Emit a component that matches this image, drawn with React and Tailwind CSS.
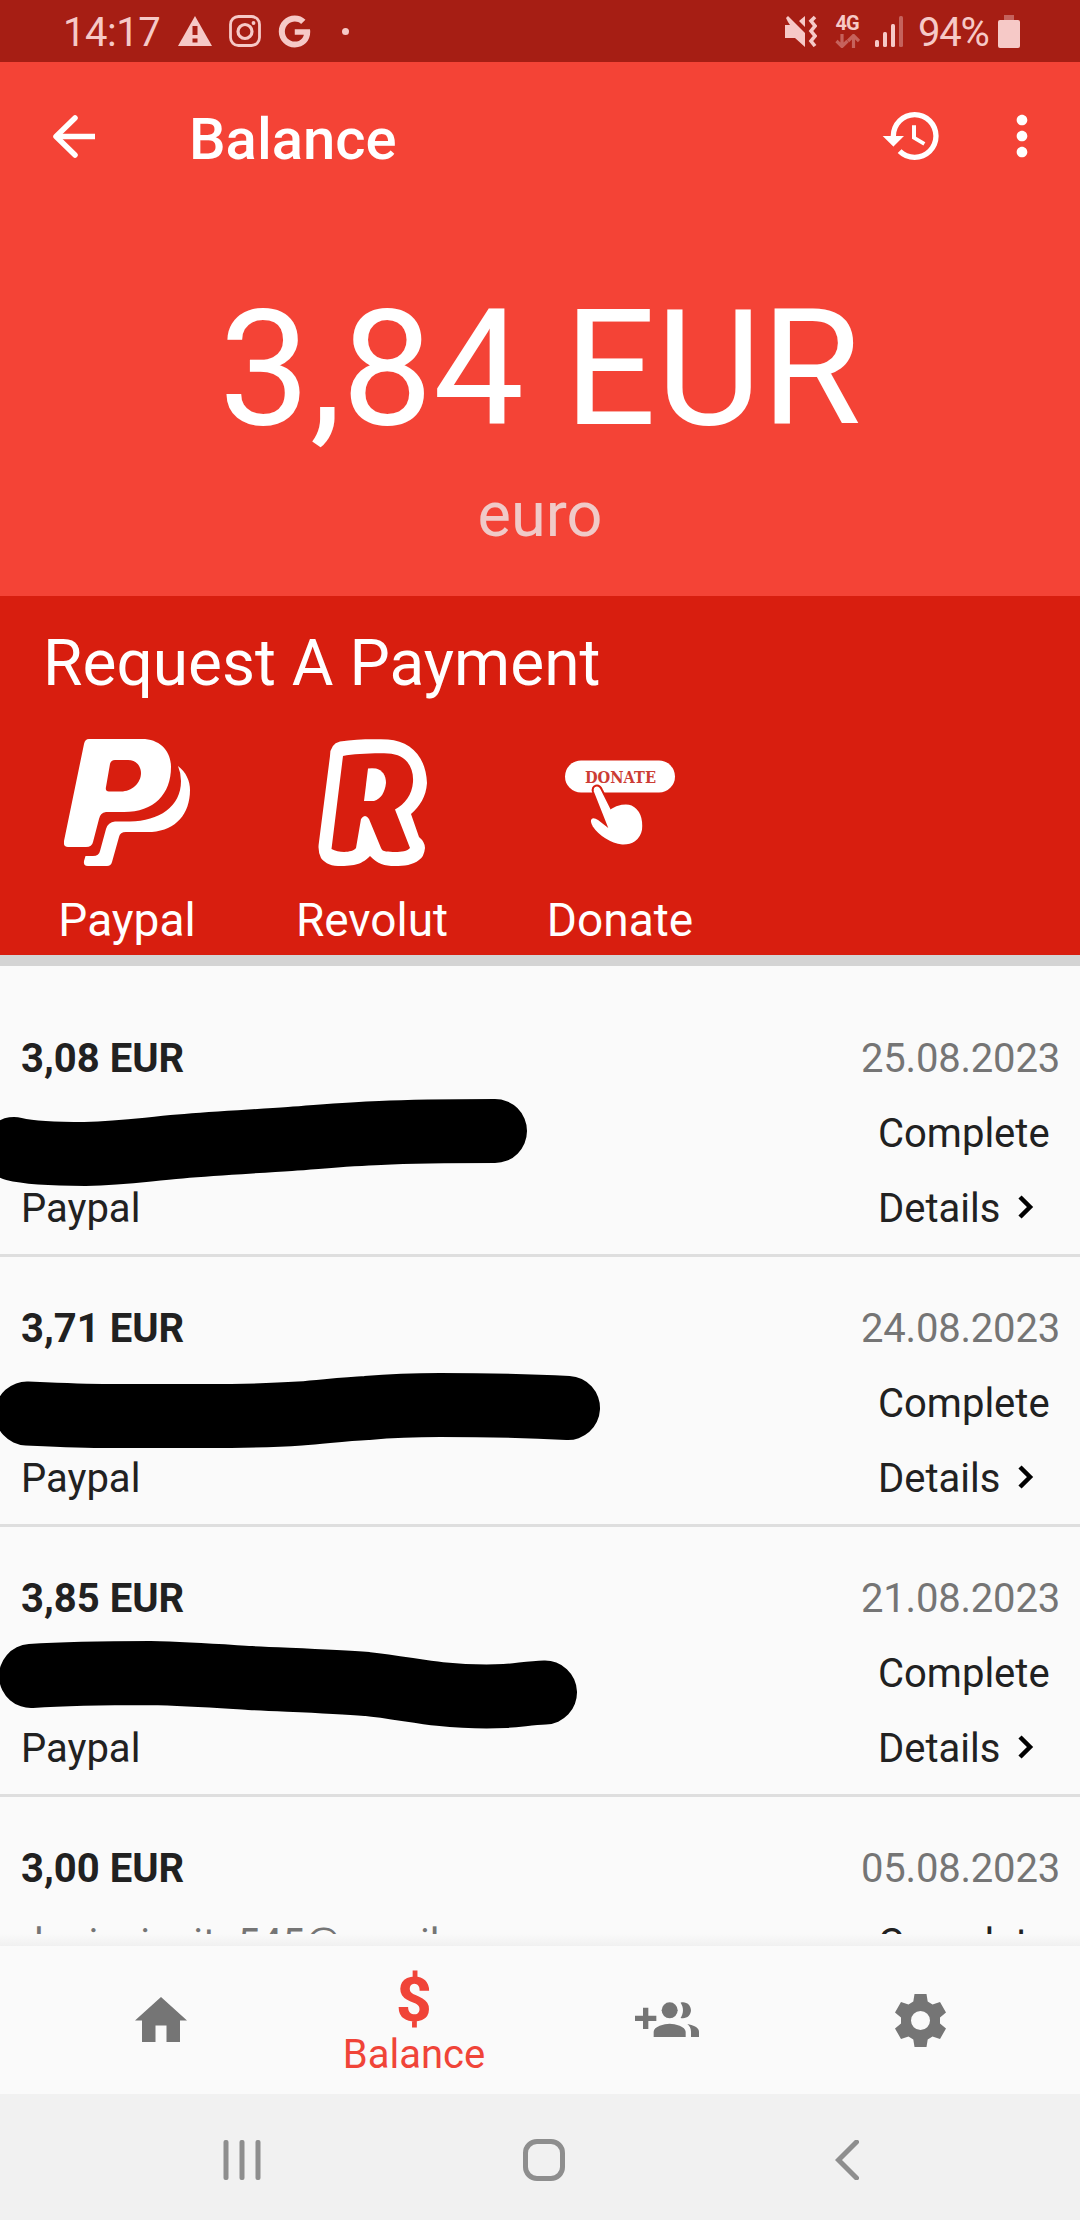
import React from 'react';
import { MdHistory, MdMoreVert } from 'react-icons/md';
import { FaGoogle } from 'react-icons/fa';

const payments = [
  {
    amount: '3,08 EUR',
    date: '25.08.2023',
    mark: 'M14 162 C30 166 60 167 85 167 C125 166 140 163 180 159.5 C220 156 245 155 290 152 C330 149 350 147 380 146 C420 144 450 144 495 144',
  },
  {
    amount: '3,71 EUR',
    date: '24.08.2023',
    mark: 'M27 156.5 C60 158 80 159 110 159 H204 C240 159 270 158.5 300 156.5 C330 154 345 152 367 151 C390 149 410 148 440 148 C480 148 530 149 568 151',
  },
  {
    amount: '3,85 EUR',
    date: '21.08.2023',
    mark: 'M31 149 C60 147 110 146 150 146 C190 147 210 148.5 250 151 C290 153 330 154 367 157 C395 160 420 165 440 167 C465 169.5 485 170 505 169 C520 168 530 166 545 165.5',
  },
  { amount: '3,00 EUR', date: '05.08.2023', email: 'doniecienite545@gmail.com' },
];

function StatusBar() {
  return (
    <div className="flex items-center h-[62px] pl-[63px] bg-[#a61e14] text-[#f6c9c7] shrink-0">
      <span className="w-[115px] pt-1 text-[40px] leading-none tracking-[-0.5px]">14:17</span>
      <svg className="w-[34px] h-[30px]" viewBox="0 0 34 30">
        <path d="M17 0L34 30H0Z" fill="currentColor" />
        <path d="M17 10v9M17 22.500v4" stroke="#a61e14" strokeWidth="5" />
      </svg>
      <svg className="ml-[17px] w-8 h-8" viewBox="0 0 32 32" fill="none" stroke="currentColor">
        <rect x="1.500" y="1.500" width="29" height="29" rx="8" strokeWidth="2.800" />
        <circle cx="16" cy="16.500" r="7" strokeWidth="3.200" />
        <circle cx="24.500" cy="8" r="1.900" fill="currentColor" stroke="none" />
      </svg>
      <FaGoogle className="ml-[17px] w-[33px] h-[33px]" />
      <span className="ml-[31px] w-[7px] h-[7px] rounded-full bg-current" />

      <svg className="ml-[436px] w-[32px] h-8" viewBox="0 0 32 32">
        <path d="M0 10H5L3 7L1 3L3 1L20 18V32L10 23H0ZM14 6L20 1V12Z" fill="currentColor" />
        <path d="M30 2L26 6L30 11L26 16L30 21L26 26L30 31" fill="none" stroke="currentColor" strokeWidth="3.600" />
      </svg>
      <div className="ml-[17px] flex flex-col w-[26px] items-center">
        <span className="text-[20px] leading-[16px] font-bold tracking-[-1px]">4G</span>
        <svg className="mt-[3px] w-[25px] h-[14px] opacity-40" viewBox="0 0 25 14" fill="none" stroke="currentColor" strokeWidth="3.200">
          <path d="M7 0V12M1.500 7L7 12.500L12.500 7M18.500 14V2M13 7L18.500 1.500L24 7" />
        </svg>
      </div>
      <svg className="ml-[15px] w-[29px] h-[31px]" viewBox="0 0 29 31" fill="currentColor">
        <rect x="0" y="24" width="4" height="7" rx="1.500" />
        <rect x="8" y="16" width="4" height="15" rx="1.500" />
        <rect x="16" y="8" width="4" height="23" rx="1.500" />
        <rect x="24" y="0" width="4" height="31" rx="1.500" opacity="0.4" />
      </svg>
      <span className="ml-[14px] w-[80px] pt-1 text-[40px] leading-none tracking-[-1.2px]">94%</span>
      <svg className="w-[22px] h-[33px]" viewBox="0 0 22 33" fill="currentColor">
        <rect x="6" y="0" width="10" height="6" opacity="0.4" />
        <rect x="0" y="5" width="22" height="28" rx="2" />
      </svg>
    </div>
  );
}

function PaypalLogo() {
  return (
    <svg className="w-[127px] h-[128px]" viewBox="0 0 127 128" fill="white">
      <path
        fillRule="evenodd"
        d="M25 0H78C96 0 107 12 107 28C107 55 90 73 60 73H42Q36 74 35 80L29 103Q28 108 22 108H4Q-1 108 0 102L20 5Q21 0 25 0ZM51 21Q47 21 46 25L42 48Q41 52.500 45 52.500H57C68 52.500 77 44 77 34C77 27 72 21 64 21Z"
      />
      <path d="M114 27C122 33 126 42 126 51C126 75 112 91 88 93H62Q56 93 55 98L48 123Q47 127 43 127H24Q19 127 20 122L21.500 117H29Q35 117 36 112L42 90Q44 83 51 82.500H66C95 82 117 68 117 42Q117 34 114 27Z" />
    </svg>
  );
}

function RevolutLogo() {
  return (
    <svg className="w-[109px] h-[128px]" viewBox="0 0 109 128">
      <path
        fill="white"
        d="M12 17Q12 5 22 2.500C38 0 55 0 70 0.500C92 2 108 17 109 44C108 58 102 67 93 75L101 98Q107 103 107 109Q106 118 101 121C95 126 86 127 77 127C66 127 60 125 52 117C44 125 38 127 20 127C11 127 5 122 3 119Q0 113 0.600 106Z"
      />
      <path
        fill="#d81e0f"
        d="M25 17C36 15 55 14 70 14.500C87 15 96 27 95 43C94 56 87 65 77 70.500L92 109C88 114 75 113 68 112.500Q64 112 63 109L51 80Q47 74 43 80L38 109C34 114 21 114 13.500 110Z"
      />
      <path fill="white" d="M50 29.500Q54 29 58 29.500C64 31 68 36 68 44C67 53 63 60 56 62H46Z" />
    </svg>
  );
}

function DonateLogo() {
  return (
    <svg className="w-[128px] h-[128px]" viewBox="0 0 128 128">
      <rect x="9" y="21.500" width="110" height="32" rx="16" fill="white" />
      <text
        x="29"
        y="43.500"
        fontFamily="'DejaVu Serif', serif"
        fontSize="16.500"
        fontWeight="bold"
        fill="#cc3c34"
        textLength="71"
        lengthAdjust="spacingAndGlyphs"
      >
        DONATE
      </text>
      <path
        d="M37 53C35 46 43 44 46 51L55 69C61 65 70 63 76 65.500C85 70 88 80 87 91C85 102 76 107 66 106.500C54 105 42 97 36 88C31 79 36 76 43 80.500L50 86Z"
        fill="white"
        stroke="#d81e0f"
        strokeWidth="2"
      />
    </svg>
  );
}

function PaymentRow({ amount, date, mark, email }) {
  return (
    <div className="relative flex justify-between h-[270px] pt-[34px] pl-[21px] pr-[22px] border-b-[3px] border-[#dedede] text-[40px] leading-[75px] text-[#212121] shrink-0">
      <div className="flex flex-col">
        <span className="font-bold">{amount}</span>
        <span className="h-[75px] text-[#757575]">{email}</span>
        <span>Paypal</span>
      </div>
      <div className="flex flex-col w-[197px]">
        <span className="text-[#757575] tracking-[-0.2px]">{date}</span>
        <span className="pl-[17px]">Complete</span>
        <span className="pl-[17px] flex items-center">
          Details
          <svg className="ml-[18px] mb-1 w-4 h-6" viewBox="0 0 16 24" fill="none" stroke="black" strokeWidth="4.500">
            <path d="M2 2L12 12L2 22" />
          </svg>
        </span>
      </div>
      {mark && (
        <svg className="absolute left-0 top-0 w-[640px] h-[267px]" viewBox="0 0 640 267">
          <path d={mark} fill="none" stroke="black" strokeWidth="64" strokeLinecap="round" />
        </svg>
      )}
    </div>
  );
}

function App() {
  return (
    <div
      className="flex flex-col w-[1080px] h-[2220px] overflow-hidden bg-[#fafafa]"
      style={{ fontFamily: 'Roboto, sans-serif' }}
    >
      <StatusBar />

      {/* Balance header */}
      <div className="flex flex-col h-[534px] bg-[#f44336] text-white shrink-0">
        <div className="flex items-center h-[148px] pl-[50px] pr-[26px]">
          <svg className="w-[48px] h-[48px]" viewBox="0 0 48 48" fill="none" stroke="white" strokeWidth="5.500" strokeLinecap="round" strokeLinejoin="round">
            <path d="M25 6L6 24.500L25 43" />
            <path d="M7 24.500H45" strokeLinecap="butt" />
          </svg>
          <h1 className="ml-[91px] pt-[5px] text-[58px] leading-none font-medium">Balance</h1>
          <MdHistory className="ml-auto w-16 h-16" />
          <MdMoreVert className="ml-[46px] w-16 h-16" />
        </div>
        <div className="mt-[78px] text-center text-[162px] leading-none">3,84 EUR</div>
        <div className="mt-[33px] text-center text-[63px] leading-none text-[#f0cac8]">euro</div>
      </div>

      {/* Payment methods */}
      <div className="h-[370px] pt-[36px] bg-[#d81e0f] border-b-[11px] border-[#d4d4d4] text-white shrink-0">
        <h2 className="pl-[43px] text-[64px] leading-none">Request A Payment</h2>
        <div className="flex mt-[43px] pl-1 text-[46px] leading-none">
          <div className="flex flex-col items-center w-[246px]">
            <PaypalLogo />
            <span className="mt-[30px]">Paypal</span>
          </div>
          <div className="flex flex-col items-center w-[244px]">
            <RevolutLogo />
            <span className="mt-[30px]">Revolut</span>
          </div>
          <div className="flex flex-col items-center w-[252px]">
            <DonateLogo />
            <span className="mt-[30px]">Donate</span>
          </div>
        </div>
      </div>

      {/* History list */}
      <div className="flex flex-col h-[968px] pt-[21px] overflow-hidden shrink-0">
        {payments.map((p) => (
          <PaymentRow key={p.date} {...p} />
        ))}
      </div>

      {/* Tabs */}
      <div className="h-[12px] bg-gradient-to-b from-[#fafafa] to-[#f0f0f0] shrink-0" />
      <div className="flex h-[148px] pl-[35px] text-[#757575] shrink-0">
        <div className="flex justify-center w-[252px] pt-[51px]">
          <svg className="w-[52px] h-[45px]" viewBox="0 0 52 45" fill="currentColor">
            <path d="M26 0L52 23.500H45V45H31.500V28.500H20.500V45H7V23.500H0Z" />
          </svg>
        </div>
        <div className="flex flex-col items-center w-[254px] pt-[22px] text-[#f04438]">
          <span className="text-[62px] leading-[64px] font-extrabold">$</span>
          <span className="text-[40px] leading-[46px]">Balance</span>
        </div>
        <div className="flex justify-center w-[252px] pt-[43px]">
          <svg className="w-16 h-16" viewBox="0 0 24 24" fill="currentColor">
            <path d="M8 10H5V7H3v3H0v2h3v3h2v-3h3v-2z" />
            <path d="M18 11c1.660 0 2.990-1.340 2.990-3S19.660 5 18 5c-.320 0-.630.050-.910.140.570.810.900 1.790.900 2.860s-.340 2.040-.900 2.860c.280.090.590.140.910.140z" />
            <circle cx="13" cy="8" r="3" />
            <path d="M19.620 13.160c.830.730 1.380 1.660 1.380 2.840v2h3v-2c0-1.540-2.370-2.490-4.380-2.840zM13 13c-2 0-6 1-6 3v2h12v-2c0-2-4-3-6-3z" />
          </svg>
        </div>
        <div className="flex justify-center w-[254px] pt-[48px]">
          <svg className="w-[51px] h-[53px]" viewBox="0 0 51 53" fill="currentColor">
            <path
              fillRule="evenodd"
              d="M19.500 0H31.500L32.700 7.500L37.500 10.500L45 8L51 18.500L45 23.500V29.500L51 34.500L45 45L37.500 42.500L32.700 45.500L31.500 53H19.500L18.300 45.500L13.500 42.500L6 45L0 34.500L6 29.500V23.500L0 18.500L6 8L13.500 10.500L18.300 7.500ZM25.500 17A9.500 9.500 0 1 0 25.500 36A9.500 9.500 0 1 0 25.500 17Z"
            />
          </svg>
        </div>
      </div>

      {/* System navigation */}
      <div className="flex items-center h-[126px] pt-[6px] pl-[223px] bg-[#f1f1f1] shrink-0">
        <svg className="w-[38px] h-[40px]" viewBox="0 0 38 40" fill="#8e8e8e">
          <rect x="0.500" width="5" height="40" rx="2" />
          <rect x="16.500" width="5" height="40" rx="2" />
          <rect x="32.500" width="5" height="40" rx="2" />
        </svg>
        <div className="ml-[262px] w-[42px] h-[42px] rounded-[14px] border-[5px] border-[#8e8e8e]" />
        <svg className="ml-[270px] w-[24px] h-[40px]" viewBox="0 0 24 40" fill="none" stroke="#8e8e8e" strokeWidth="5">
          <path d="M21.500 2L3.500 20L21.500 38" strokeLinecap="round" />
        </svg>
      </div>
    </div>
  );
}

export default App;
